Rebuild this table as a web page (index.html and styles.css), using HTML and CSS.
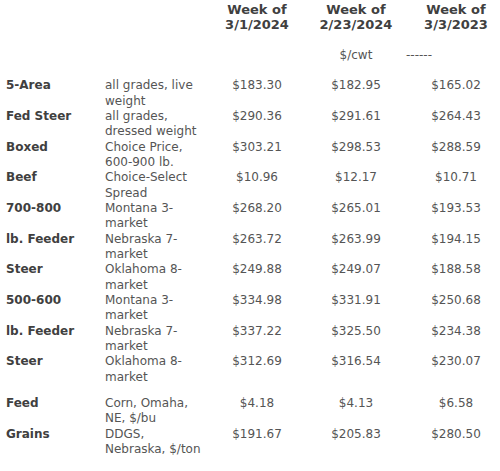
FILE: index.html
```html
<!DOCTYPE html>
<html lang="en">
<head>
<meta charset="utf-8">
<title>Cattle and feed prices</title>
<link rel="stylesheet" href="styles.css">
</head>
<body>
<table class="prices">
  <colgroup>
    <col class="c-label">
    <col class="c-desc">
    <col class="c-v1">
    <col class="c-v2">
    <col class="c-v3">
  </colgroup>
  <thead>
    <tr class="head">
      <th></th>
      <th></th>
      <th>Week of<br>3/1/2024</th>
      <th>Week of<br>2/23/2024</th>
      <th class="last">Week of<br>3/3/2023</th>
    </tr>
    <tr class="unit">
      <td></td>
      <td></td>
      <td></td>
      <td class="val">$/cwt</td>
      <td class="dash">------</td>
    </tr>
  </thead>
  <tbody>
    <tr><td class="lbl">5-Area</td><td class="desc">all grades, live weight</td><td class="val">$183.30</td><td class="val">$182.95</td><td class="val last">$165.02</td></tr>
    <tr><td class="lbl">Fed Steer</td><td class="desc">all grades, dressed weight</td><td class="val">$290.36</td><td class="val">$291.61</td><td class="val last">$264.43</td></tr>
    <tr><td class="lbl">Boxed</td><td class="desc">Choice Price, 600-900 lb.</td><td class="val">$303.21</td><td class="val">$298.53</td><td class="val last">$288.59</td></tr>
    <tr><td class="lbl">Beef</td><td class="desc">Choice-Select Spread</td><td class="val">$10.96</td><td class="val">$12.17</td><td class="val last">$10.71</td></tr>
    <tr><td class="lbl">700-800</td><td class="desc">Montana 3-market</td><td class="val">$268.20</td><td class="val">$265.01</td><td class="val last">$193.53</td></tr>
    <tr><td class="lbl">lb. Feeder</td><td class="desc">Nebraska 7-market</td><td class="val">$263.72</td><td class="val">$263.99</td><td class="val last">$194.15</td></tr>
    <tr><td class="lbl">Steer</td><td class="desc">Oklahoma 8-market</td><td class="val">$249.88</td><td class="val">$249.07</td><td class="val last">$188.58</td></tr>
    <tr><td class="lbl">500-600</td><td class="desc">Montana 3-market</td><td class="val">$334.98</td><td class="val">$331.91</td><td class="val last">$250.68</td></tr>
    <tr><td class="lbl">lb. Feeder</td><td class="desc">Nebraska 7-market</td><td class="val">$337.22</td><td class="val">$325.50</td><td class="val last">$234.38</td></tr>
    <tr><td class="lbl">Steer</td><td class="desc">Oklahoma 8-market</td><td class="val">$312.69</td><td class="val">$316.54</td><td class="val last">$230.07</td></tr>
    <tr class="spacer"><td colspan="5"></td></tr>
    <tr><td class="lbl">Feed</td><td class="desc">Corn, Omaha, NE, $/bu</td><td class="val">$4.18</td><td class="val">$4.13</td><td class="val last">$6.58</td></tr>
    <tr><td class="lbl">Grains</td><td class="desc">DDGS, Nebraska, $/ton</td><td class="val">$191.67</td><td class="val">$205.83</td><td class="val last">$280.50</td></tr>
  </tbody>
</table>
</body>
</html>
```
FILE: styles.css
```css
html, body {
  margin: 0;
  padding: 0;
  background: #ffffff;
  overflow: hidden;
}

body {
  font-family: "DejaVu Sans", Verdana, sans-serif;
  font-size: 12px;
  color: #555555;
}

.prices {
  border-collapse: collapse;
  table-layout: fixed;
  width: 494px;
  margin-left: 6px;
}

.c-label { width: 99px; }
.c-desc { width: 103px; }
.c-v1 { width: 98px; }
.c-v2 { width: 100px; }
.c-v3 { width: 94px; }

.prices th,
.prices td {
  padding: 0;
  vertical-align: top;
  line-height: 15.33px;
}

.head th {
  font-size: 13px;
  font-weight: bold;
  line-height: 15px;
  color: #404040;
  text-align: center;
  padding-top: 2px;
}

.head th.last,
.val.last {
  padding-left: 6px;
}

.unit td {
  padding-top: 16px;
  padding-bottom: 15px;
}

.dash {
  padding-left: 5px;
  text-align: left;
}

.lbl {
  font-weight: bold;
  color: #404040;
}

.desc {
  text-align: left;
}

.val {
  text-align: center;
}

.spacer td {
  height: 11px;
  line-height: 0;
}

.prices tbody tr:not(.spacer) td {
  height: 30.67px;
}
```
